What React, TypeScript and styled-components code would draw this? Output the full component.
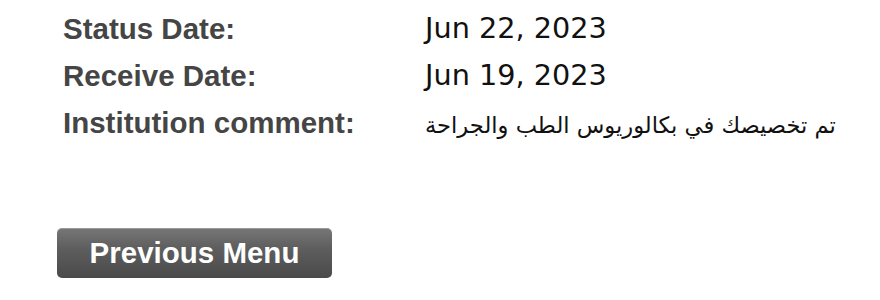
import { createGlobalStyle, styled } from 'styled-components';

const GlobalStyle = createGlobalStyle`
    body {
        margin: 0;
        background: #ffffff;
    }
`;

interface RowData {
    label: string;
    value: string;
    rtl?: boolean;
}

interface ValueProps {
    $rtl?: boolean;
}

const rows: RowData[] = [
    { label: 'Status Date:', value: 'Jun 22, 2023' },
    { label: 'Receive Date:', value: 'Jun 19, 2023' },
    { label: 'Institution comment:', value: 'تم تخصيصك في بكالوريوس الطب والجراحة', rtl: true },
];

const App = () => {
    return (
        <>
            <GlobalStyle />
            <Container>
                <DetailsGrid>
                    {rows.map((row) => (
                        <Row key={row.label}>
                            <Label>{row.label}</Label>
                            <Value dir={row.rtl ? 'rtl' : 'ltr'} $rtl={row.rtl}>
                                {row.value}
                            </Value>
                        </Row>
                    ))}
                </DetailsGrid>
                <MenuButton type="button">Previous Menu</MenuButton>
            </Container>
        </>
    );
};

export default App;

const Container = styled.div`
    display: flex;
    flex-direction: column;
    align-items: flex-start;
    padding: 5px 0 0 63px;
    width: 880px;
    height: 300px;
    box-sizing: border-box;
`;

const DetailsGrid = styled.div`
    display: grid;
    grid-template-columns: 362px auto;
`;

const Row = styled.div`
    display: contents;
`;

const Label = styled.div`
    font-family: 'Liberation Sans', Arial, sans-serif;
    font-weight: bold;
    font-size: 29.5px;
    line-height: 47px;
    color: #454545;
`;

const Value = styled.div<ValueProps>`
    font-family: 'DejaVu Sans', Verdana, sans-serif;
    font-size: ${(props) => (props.$rtl ? '22.6px' : '28.7px')};
    line-height: 47px;
    color: #111111;
    white-space: nowrap;
    justify-self: start;
    padding-top: ${(props) => (props.$rtl ? '3px' : '0')};
`;

const MenuButton = styled.button`
    margin: 79px 0 0 -6px;
    width: 275px;
    height: 50px;
    border: none;
    border-radius: 5px;
    background: linear-gradient(to bottom, #777777 0%, #5e5e5e 40%, #4a4a4a 100%);
    box-shadow: inset 0 1px 0 rgba(255, 255, 255, 0.25);
    color: #ffffff;
    font-family: 'Liberation Sans', Arial, sans-serif;
    font-weight: bold;
    font-size: 29.5px;
    padding: 0;
    cursor: pointer;
`;
